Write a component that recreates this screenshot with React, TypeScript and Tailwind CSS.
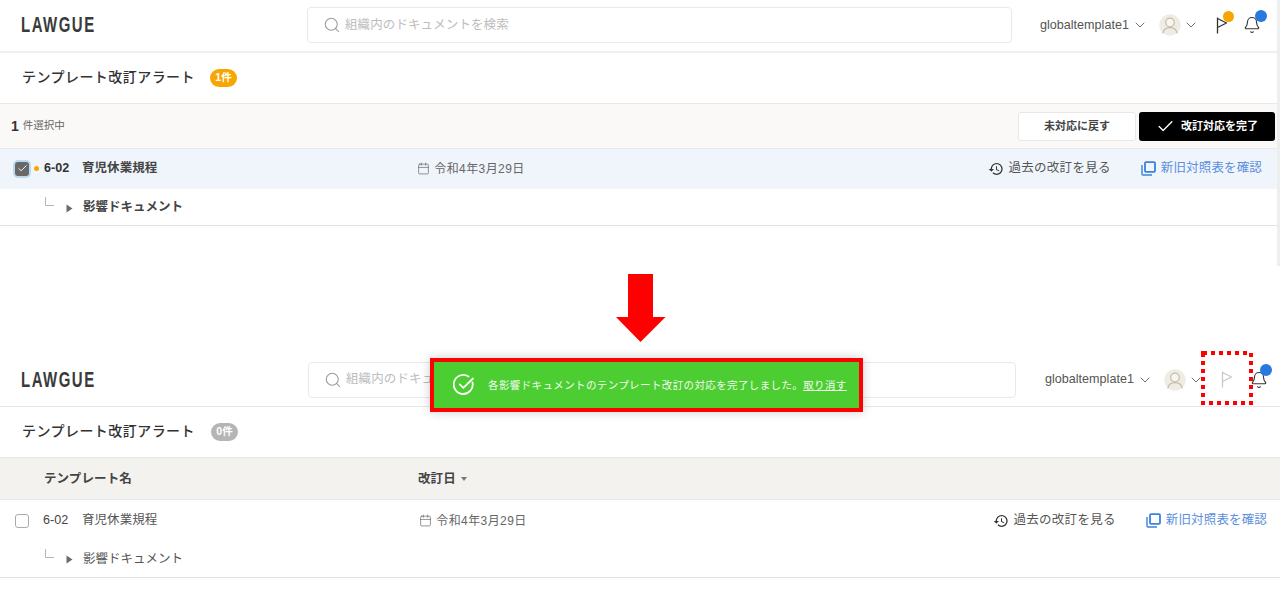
import React from "react";
import { ChevronDown, Search, Calendar, Bell, Check } from "lucide-react";
import { MdHistory } from "react-icons/md";

const cjk = "font-['Liberation_Sans','Noto_Sans_CJK_JP',sans-serif]";

function Flag({ className }: { className: string }) {
  return (
    <svg width="12" height="17" viewBox="0 0 12 17" fill="none" className={className} stroke="currentColor" strokeWidth="1.3">
      <path d="M1.5 0.5V16.5" />
      <path d="M1.5 1.5L10.5 6L1.5 10.5" strokeLinejoin="round" />
    </svg>
  );
}

function Avatar() {
  return (
    <svg width="22" height="22" viewBox="0 0 22 22" fill="none">
      <circle cx="11" cy="11" r="10.7" fill="#efece5" />
      <circle cx="11" cy="8.5" r="4.3" stroke="#c4bda8" strokeWidth="1.2" fill="#f7f5f0" />
      <path d="M3.8 19.5C4.5 15.5 7 13.6 11 13.6C15 13.6 17.5 15.5 18.2 19.5" stroke="#c4bda8" strokeWidth="1.2" />
    </svg>
  );
}

function CopyIcon() {
  return (
    <svg width="15" height="15" viewBox="0 0 15 15" fill="none" stroke="#3b82dc" className="shrink-0">
      <rect x="4" y="1.2" width="10" height="9.6" rx="1" strokeWidth="1.8" />
      <path d="M1 4V13C1 13.6 1.4 14 2 14H11" strokeWidth="1.4" />
    </svg>
  );
}

function Connector() {
  return (
    <svg width="9" height="9" viewBox="0 0 9 9" fill="none" stroke="#b5b5b5" className="shrink-0">
      <path d="M0.5 0V8.5H9" />
    </svg>
  );
}

function Caret() {
  return (
    <svg width="7" height="9" viewBox="0 0 7 9" className="shrink-0">
      <path d="M0.5 0.5L6.5 4.5L0.5 8.5Z" fill="#6b6b6b" />
    </svg>
  );
}

function Logo() {
  return (
    <span className="w-[76px] shrink-0 flex">
      <span className="inline-block origin-left scale-x-[0.68] font-['Liberation_Sans',sans-serif] text-[22px] leading-none font-bold tracking-[2.2px] text-[#3a3a3a]">
        LAWGUE
      </span>
    </span>
  );
}

function Actions() {
  return (
    <>
      <span className="flex items-center gap-[4px] text-[12.5px] tracking-[0.3px] text-[#555]">
        <MdHistory size={16} className="text-[#333] shrink-0" />
        過去の改訂を見る
      </span>
      <span className="flex items-center gap-[5px] text-[12.5px] tracking-[0.15px] text-[#5b8fdc] ml-[30px]">
        <CopyIcon />
        新旧対照表を確認
      </span>
    </>
  );
}

export default function App() {
  return (
    <div className={`${cjk} relative w-[1280px] h-[615px] overflow-hidden bg-white text-[#333]`}>
      {/* top screen */}
      <div className="h-[266px] border-r-[3px] border-[#eeeeee] w-[1280px] overflow-hidden">
        <header className="h-[53px] border-b-2 border-[#f0f0f0] flex items-center pl-[21px] pb-[1px] w-[1280px]">
          <Logo />
          <div className="ml-[210px] w-[705px] h-[36px] border border-[#e9e9e9] rounded-[4px] flex items-center pl-[15px] gap-[4px] text-[12.5px] text-[#bdbdbd] tracking-[0.1px]">
            <Search size={18} strokeWidth={1.4} className="text-[#9a9a9a]" />
            組織内のドキュメントを検索
          </div>
          <span className="ml-[28px] text-[12.6px] text-[#555]">globaltemplate1</span>
          <ChevronDown size={16} strokeWidth={1.4} className="ml-[3px] text-[#666]" />
          <span className="ml-[11px]"><Avatar /></span>
          <ChevronDown size={16} strokeWidth={1.4} className="ml-[2px] text-[#666]" />
          <span className="relative ml-[17px] flex">
            <Flag className="text-[#333]" />
            <span className="absolute left-[7px] -top-[6px] w-[11px] h-[11px] rounded-full bg-[#f7a600]" />
          </span>
          <span className="relative ml-[15px] flex">
            <Bell size={18} strokeWidth={1.5} className="text-[#333]" />
            <span className="absolute left-[12px] -top-[6px] w-[12px] h-[12px] rounded-full bg-[#2878e0]" />
          </span>
        </header>
        <div className="h-[51px] border-b border-[#e8e8e8] flex items-center pl-[22px] pb-[2px]">
          <h1 className="text-[14px] font-medium tracking-[0.45px] text-[#333]">テンプレート改訂アラート</h1>
          <span className="ml-[15px] mt-[2px] w-[27px] h-[18px] rounded-full bg-[#f7a600] text-white text-[10.5px] font-bold flex items-center justify-center">1件</span>
        </div>
        <div className="h-[45px] border-b border-[#e8e8e8] bg-[#fbf9f7] flex items-center pl-[11px] pr-[2px]">
          <span className="text-[14px] font-bold text-[#333]">1</span>
          <span className="ml-[4px] text-[10.5px] text-[#666]">件選択中</span>
          <button className="ml-auto w-[118px] h-[29px] border border-[#e8e8e8] rounded-[3px] bg-white text-[11px] font-bold text-[#444]">未対応に戻す</button>
          <button className="ml-[3px] w-[136px] h-[29px] rounded-[3px] bg-black text-white text-[11px] font-bold flex items-center pl-[17px] gap-[6px]">
            <Check size={19} strokeWidth={1.7} />
            改訂対応を完了
          </button>
        </div>
        <div className="h-[40px] bg-[#f0f5fc] flex items-center pl-[15px] pr-[15px] pb-[1px]">
          <span className="w-[14px] h-[14px] rounded-[3px] bg-[#686868] flex items-center justify-center shadow-[0_0_0_2px_#bcd9ef]">
            <Check size={11} strokeWidth={2} className="text-white" />
          </span>
          <span className="ml-[5px] w-[5px] h-[5px] rounded-full bg-[#f7a600] shrink-0" />
          <span className="ml-[5px] text-[12.6px] font-bold text-[#333] w-[38px]">6-02</span>
          <span className="text-[12.5px] font-bold tracking-[0.05px] text-[#444]">育児休業規程</span>
          <span className="ml-[260px] flex items-center gap-[4px] text-[12px] tracking-[0.4px] text-[#666]">
            <Calendar size={13} strokeWidth={1.3} className="text-[#666]" />
            令和4年3月29日
          </span>
          <span className="ml-auto flex items-center"><Actions /></span>
        </div>
        <div className="h-[37px] border-b border-[#e2e2e2] flex items-center pl-[45px]">
          <span className="-mt-[11px] flex"><Connector /></span>
          <span className="ml-[12px] mt-[2px] flex"><Caret /></span>
          <span className="ml-[10px] text-[12.5px] font-bold text-[#444]">影響ドキュメント</span>
        </div>
      </div>

      {/* bottom screen */}
      <div className="mt-[88px] w-[1285px]">
        <header className="h-[53px] border-b border-[#e8e8e8] flex items-center pl-[21px] pb-[1px]">
          <Logo />
          <div className="ml-[211px] w-[708px] h-[36px] border border-[#e9e9e9] rounded-[4px] flex items-center pl-[15px] gap-[4px] text-[12.5px] text-[#bdbdbd] tracking-[0.1px]">
            <Search size={18} strokeWidth={1.4} className="text-[#9a9a9a]" />
            組織内のドキュメントを検索
          </div>
          <span className="ml-[29px] text-[12.6px] text-[#555]">globaltemplate1</span>
          <ChevronDown size={16} strokeWidth={1.4} className="ml-[3px] text-[#666]" />
          <span className="ml-[11px]"><Avatar /></span>
          <ChevronDown size={16} strokeWidth={1.4} className="ml-[2px] text-[#666]" />
          <span className="relative ml-[17px] flex">
            <Flag className="text-[#c9c9c9]" />
          </span>
          <span className="relative ml-[17px] flex">
            <Bell size={18} strokeWidth={1.5} className="text-[#333]" />
            <span className="absolute left-[10px] -top-[7px] w-[12px] h-[12px] rounded-full bg-[#2878e0]" />
          </span>
        </header>
        <div className="h-[51px] border-b border-[#e8e8e8] flex items-center pl-[22px] pb-[2px]">
          <h1 className="text-[14px] font-medium tracking-[0.45px] text-[#333]">テンプレート改訂アラート</h1>
          <span className="ml-[16px] mt-[2px] w-[27px] h-[18px] rounded-full bg-[#b5b5b5] text-white text-[10.5px] font-bold flex items-center justify-center">0件</span>
        </div>
        <div className="h-[42px] border-b border-[#e8e8e8] bg-[#f4f2ee] flex items-center pl-[44px] pt-[1px] text-[12.5px] font-bold tracking-[0.1px] text-[#444]">
          <span className="w-[374px]">テンプレート名</span>
          <span>改訂日</span>
          <svg width="6" height="4" viewBox="0 0 6 4" className="ml-[5px]"><path d="M0 0H6L3 4Z" fill="#777" /></svg>
        </div>
        <div className="h-[40px] flex items-center pl-[15px] pr-[18px] pt-[1px]">
          <span className="w-[14px] h-[14px] rounded-[3px] border border-[#aaa] bg-white" />
          <span className="ml-[14px] text-[12.6px] text-[#444] w-[39px]">6-02</span>
          <span className="text-[12.5px] tracking-[0.05px] text-[#555]">育児休業規程</span>
          <span className="ml-[262px] flex items-center gap-[4px] text-[12px] tracking-[0.4px] text-[#666]">
            <Calendar size={13} strokeWidth={1.3} className="text-[#666]" />
            令和4年3月29日
          </span>
          <span className="ml-auto flex items-center"><Actions /></span>
        </div>
        <div className="h-[38px] border-b border-[#e2e2e2] flex items-center pl-[45px]">
          <span className="-mt-[11px] flex"><Connector /></span>
          <span className="ml-[12px] mt-[1px] flex"><Caret /></span>
          <span className="ml-[10px] mt-[2px] text-[12.5px] text-[#555]">影響ドキュメント</span>
        </div>
      </div>

      {/* annotations */}
      <svg width="50" height="68" viewBox="0 0 50 68" className="absolute left-[616px] top-[274px]">
        <path d="M12 0H37V43H49.5L24.5 68L0 43H12Z" fill="#ff0000" />
      </svg>
      <div className="absolute left-[430px] top-[358px] w-[433px] h-[54px] border-[4px] border-[#ff0000] bg-[#4ccd32] flex items-center pl-[19px] text-white shadow-[0_0_10px_rgba(0,0,0,0.2)]">
        <svg width="22" height="22" viewBox="0 0 22 22" fill="none" stroke="white" strokeWidth="1.8" strokeLinecap="round" strokeLinejoin="round" className="shrink-0">
          <path d="M19.5 8.5A9.5 9.5 0 1 1 15.5 2.6" />
          <path d="M6.8 10.4L10.3 13.8L20 4.5" />
        </svg>
        <span className="ml-[13px] mt-[2px] text-[10.5px] tracking-[0.38px] whitespace-nowrap text-[#f2fbef]">各影響ドキュメントのテンプレート改訂の対応を完了しました。<span className="underline">取り消す</span></span>
      </div>
      <svg width="52" height="54" viewBox="0 0 52 54" fill="none" className="absolute left-[1201px] top-[351px]">
        <rect x="2" y="2" width="48" height="50" stroke="#ff0000" strokeWidth="4" strokeDasharray="4 4" />
      </svg>
    </div>
  );
}
